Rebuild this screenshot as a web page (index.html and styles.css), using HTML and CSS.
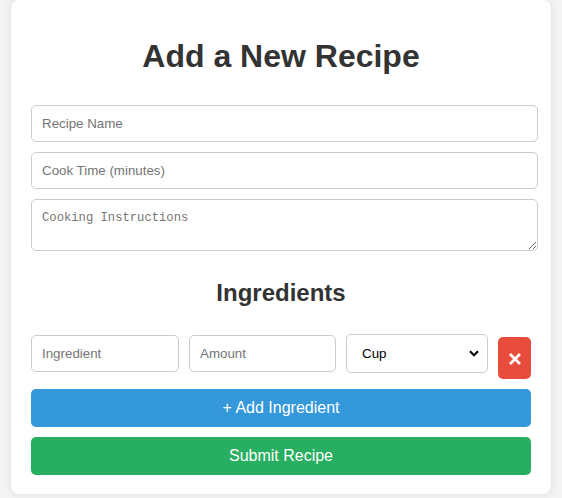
FILE: index.html
```html
<!DOCTYPE html>
<html lang="en">
<head>
<meta charset="utf-8">
<title>Add a New Recipe</title>
<link rel="stylesheet" href="styles.css">
</head>
<body>
<div class="card">
  <h1 class="title">Add a New Recipe</h1>
  <form class="form">
    <input class="field" type="text" placeholder="Recipe Name">
    <input class="field" type="text" placeholder="Cook Time (minutes)">
    <textarea class="field area" placeholder="Cooking Instructions"></textarea>
    <h2 class="subtitle">Ingredients</h2>
    <div class="row">
      <input class="small ing" type="text" placeholder="Ingredient">
      <input class="small amt" type="text" placeholder="Amount">
      <div class="select-wrap">
        <select class="unit">
          <option>Cup</option>
          <option>Tablespoon</option>
          <option>Teaspoon</option>
          <option>Gram</option>
        </select>
        <svg class="chev" width="10" height="7" viewBox="0 0 10 7"><path d="M1 1.2 L5 5.2 L9 1.2" fill="none" stroke="#000" stroke-width="2.2"/></svg>
      </div>
      <button class="del" type="button" aria-label="Remove">
        <svg width="12" height="12" viewBox="0 0 12 12"><path d="M1 1 L11 11 M11 1 L1 11" stroke="#fff" stroke-width="2.8" stroke-linecap="butt"/></svg>
      </button>
    </div>
    <button class="btn add" type="button">+ Add Ingredient</button>
    <button class="btn submit" type="submit">Submit Recipe</button>
  </form>
</div>
</body>
</html>
```
FILE: styles.css
```css
html, body {
  margin: 0;
  padding: 0;
}
body {
  background: #f4f4f4;
  font-family: "Liberation Sans", Arial, sans-serif;
  height: 498px;
}
.card {
  width: 500px;
  margin: 0 auto;
  padding: 18px 20px 19px;
  background: #fff;
  border-radius: 8px;
  box-shadow: 0 0 10px rgba(0, 0, 0, 0.1);
}
.title {
  margin: 20px 0 30px;
  font-size: 32px;
  line-height: 36.8px;
  font-weight: bold;
  color: #333;
  text-align: center;
}
.form {
  display: flex;
  flex-direction: column;
}
.field {
  display: block;
  box-sizing: border-box;
  width: 507px;
  height: 37px;
  margin: 0 0 10px;
  padding: 0 10px;
  border: 1px solid #ccc;
  border-radius: 5px;
  font-family: "Liberation Sans", Arial, sans-serif;
  font-size: 13.33px;
  color: #000;
  background: #fff;
}
.field::placeholder, .small::placeholder {
  color: #757575;
}
.area {
  height: 52px;
  margin: 0;
  padding: 11px 10px 8px;
  font-family: "Liberation Mono", monospace;
  font-size: 12.2px;
  line-height: 15px;
  resize: vertical;
}
.subtitle {
  margin: 28px 0 18px;
  font-size: 24px;
  line-height: 27.6px;
  font-weight: bold;
  color: #333;
  text-align: center;
}
.row {
  display: flex;
  align-items: flex-start;
  gap: 10px;
}
.small {
  box-sizing: border-box;
  height: 37px;
  margin-top: 11px;
  padding: 0 10px;
  border: 1px solid #ccc;
  border-radius: 5px;
  font-family: "Liberation Sans", Arial, sans-serif;
  font-size: 13.33px;
  background: #fff;
}
.ing { width: 148px; }
.amt { width: 147px; }
.select-wrap {
  position: relative;
  margin-top: 10px;
  width: 142px;
  height: 39px;
}
.unit {
  appearance: none;
  -webkit-appearance: none;
  box-sizing: border-box;
  width: 142px;
  height: 39px;
  padding: 0 24px 0 15px;
  border: 1px solid #ccc;
  border-radius: 5px;
  background: #fff;
  font-family: "Liberation Sans", Arial, sans-serif;
  font-size: 13.33px;
  color: #000;
}
.chev {
  position: absolute;
  right: 9px;
  top: 16px;
  pointer-events: none;
}
.del {
  box-sizing: border-box;
  width: 34px;
  height: 42px;
  margin-top: 13px;
  padding: 0;
  border: none;
  border-radius: 5px;
  background: #e74c3c;
  display: flex;
  align-items: center;
  justify-content: center;
}
.del svg {
  margin-top: 2px;
}
.btn {
  box-sizing: border-box;
  width: 500px;
  height: 38px;
  margin-top: 10px;
  border: none;
  border-radius: 5px;
  color: #fff;
  font-family: "Liberation Sans", Arial, sans-serif;
  font-size: 16px;
}
.add { background: #3498db; }
.submit { background: #27ae60; }
```
